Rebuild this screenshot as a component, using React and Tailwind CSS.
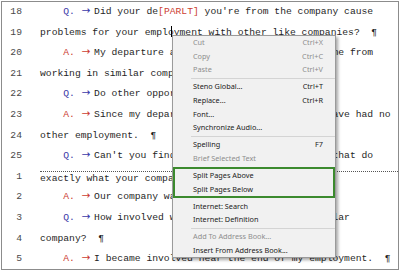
import React from "react";

const lines = [
  { n: 18, sp: "Q", t: [["Did your de"], ["[PARLT]", "text-[#cc3d32]"], [" you're from the company cause"]] },
  { n: 19, t: "problems for your employment with other like companies?  ¶" },
  { n: 20, sp: "A", t: "My departure agreement clearly prohibits me from" },
  { n: 21, t: "working in similar companies.  ¶" },
  { n: 22, sp: "Q", t: "Do other opportunities exist?  ¶" },
  { n: 23, sp: "A", t: "Since my departure from that company, I have had no" },
  { n: 24, t: "other employment.  ¶" },
  { n: 25, sp: "Q", t: "Can't you find work with other companies that do" },
  { n: 1, t: "exactly what your company did?  ¶", page: true },
  { n: 2, sp: "A", t: "Our company was the industry leader.  ¶" },
  { n: 3, sp: "Q", t: "How involved were you in making that popular" },
  { n: 4, t: "company?  ¶" },
  { n: 5, sp: "A", t: "I became involved near the end of my employment.  ¶" },
];

const menu = [
  { label: "Cut", sc: "Ctrl+X", dis: true },
  { label: "Copy", sc: "Ctrl+C", dis: true },
  { label: "Paste", sc: "Ctrl+V", dis: true },
  { sep: true },
  { label: "Steno Global...", sc: "Ctrl+T" },
  { label: "Replace...", sc: "Ctrl+R" },
  { label: "Font..." },
  { label: "Synchronize Audio..." },
  { sep: true },
  { label: "Spelling", sc: "F7" },
  { label: "Brief Selected Text", dis: true },
  { group: ["Split Pages Above", "Split Pages Below"] },
  { label: "Internet: Search" },
  { label: "Internet: Definition" },
  { sep: true },
  { label: "Add To Address Book...", dis: true },
  { label: "Insert From Address Book..." },
];

const Speaker = ({ sp }) => {
  const color = sp === "Q" ? "text-[#3a3aa8]" : "text-[#cc3d32]";
  return (
    <>
      {"    "}
      <span className={color}>{sp}.</span>{" "}
      <span className={`inline-block w-[2ch] pl-[1px] font-['DejaVu_Sans',sans-serif] text-[10.5px] leading-none ${color}`}>
        →
      </span>
    </>
  );
};

const Line = ({ line }) => (
  <div className="flex h-[20.6px] items-stretch">
    <span className="flex w-[20px] items-center justify-end text-[#4a4a4a]">{line.n}</span>
    <div
      className={`ml-[18px] flex flex-1 items-center whitespace-pre ${
        line.page ? "mt-[4px] border-t border-dotted border-[#555]" : ""
      }`}
    >
      <span>
        {line.sp && <Speaker sp={line.sp} />}
        {typeof line.t === "string"
          ? line.t
          : line.t.map(([s, c], i) => (
              <span key={i} className={c}>
                {s}
              </span>
            ))}
      </span>
    </div>
  </div>
);

const Item = ({ label, sc, dis, inGroup }) => (
  <div
    className={`flex h-[13.6px] items-center justify-between ${
      inGroup ? "pl-[18px] pr-[10px]" : "pl-[20px] pr-[12px]"
    } ${dis ? "text-[#8e8e8e]" : "text-[#1b1b1b]"}`}
  >
    <span>{label}</span>
    {sc && <span>{sc}</span>}
  </div>
);

const ContextMenu = () => (
  <div className="absolute left-[170px] top-[33px] w-[164px] border border-[#9a9a9a] bg-[#f1f1f1] font-['Noto_Sans',sans-serif] text-[7.3px] leading-none shadow-[2px_2px_3px_rgba(0,0,0,0.35)]">
    {menu.map((m, i) => {
      if (m.sep) {
        return (
          <div key={i} className="flex h-[3.5px] items-center pl-[18px]">
            <div className="h-px flex-1 bg-[#d4d4d4]" />
          </div>
        );
      }
      if (m.group) {
        return (
          <div key={i} className="my-[1.5px] border-2 border-[#3c8a2e]">
            {m.group.map((g) => (
              <Item key={g} label={g} inGroup />
            ))}
          </div>
        );
      }
      return <Item key={i} {...m} />;
    })}
  </div>
);

export default function App() {
  return (
    <div className="h-[271px] w-[400px] bg-white p-[1px]">
      <div className="relative h-full overflow-hidden border border-[#8c8c8c] bg-white font-['Liberation_Mono',monospace] text-[9.7px] text-[#1f1f1f]">
        {lines.map((l) => (
          <Line key={l.n} line={l} />
        ))}
        {/* mouse I-beam */}
        <div className="absolute left-[169px] top-[24px] h-[11px] w-px bg-black" />
        <ContextMenu />
      </div>
    </div>
  );
}
